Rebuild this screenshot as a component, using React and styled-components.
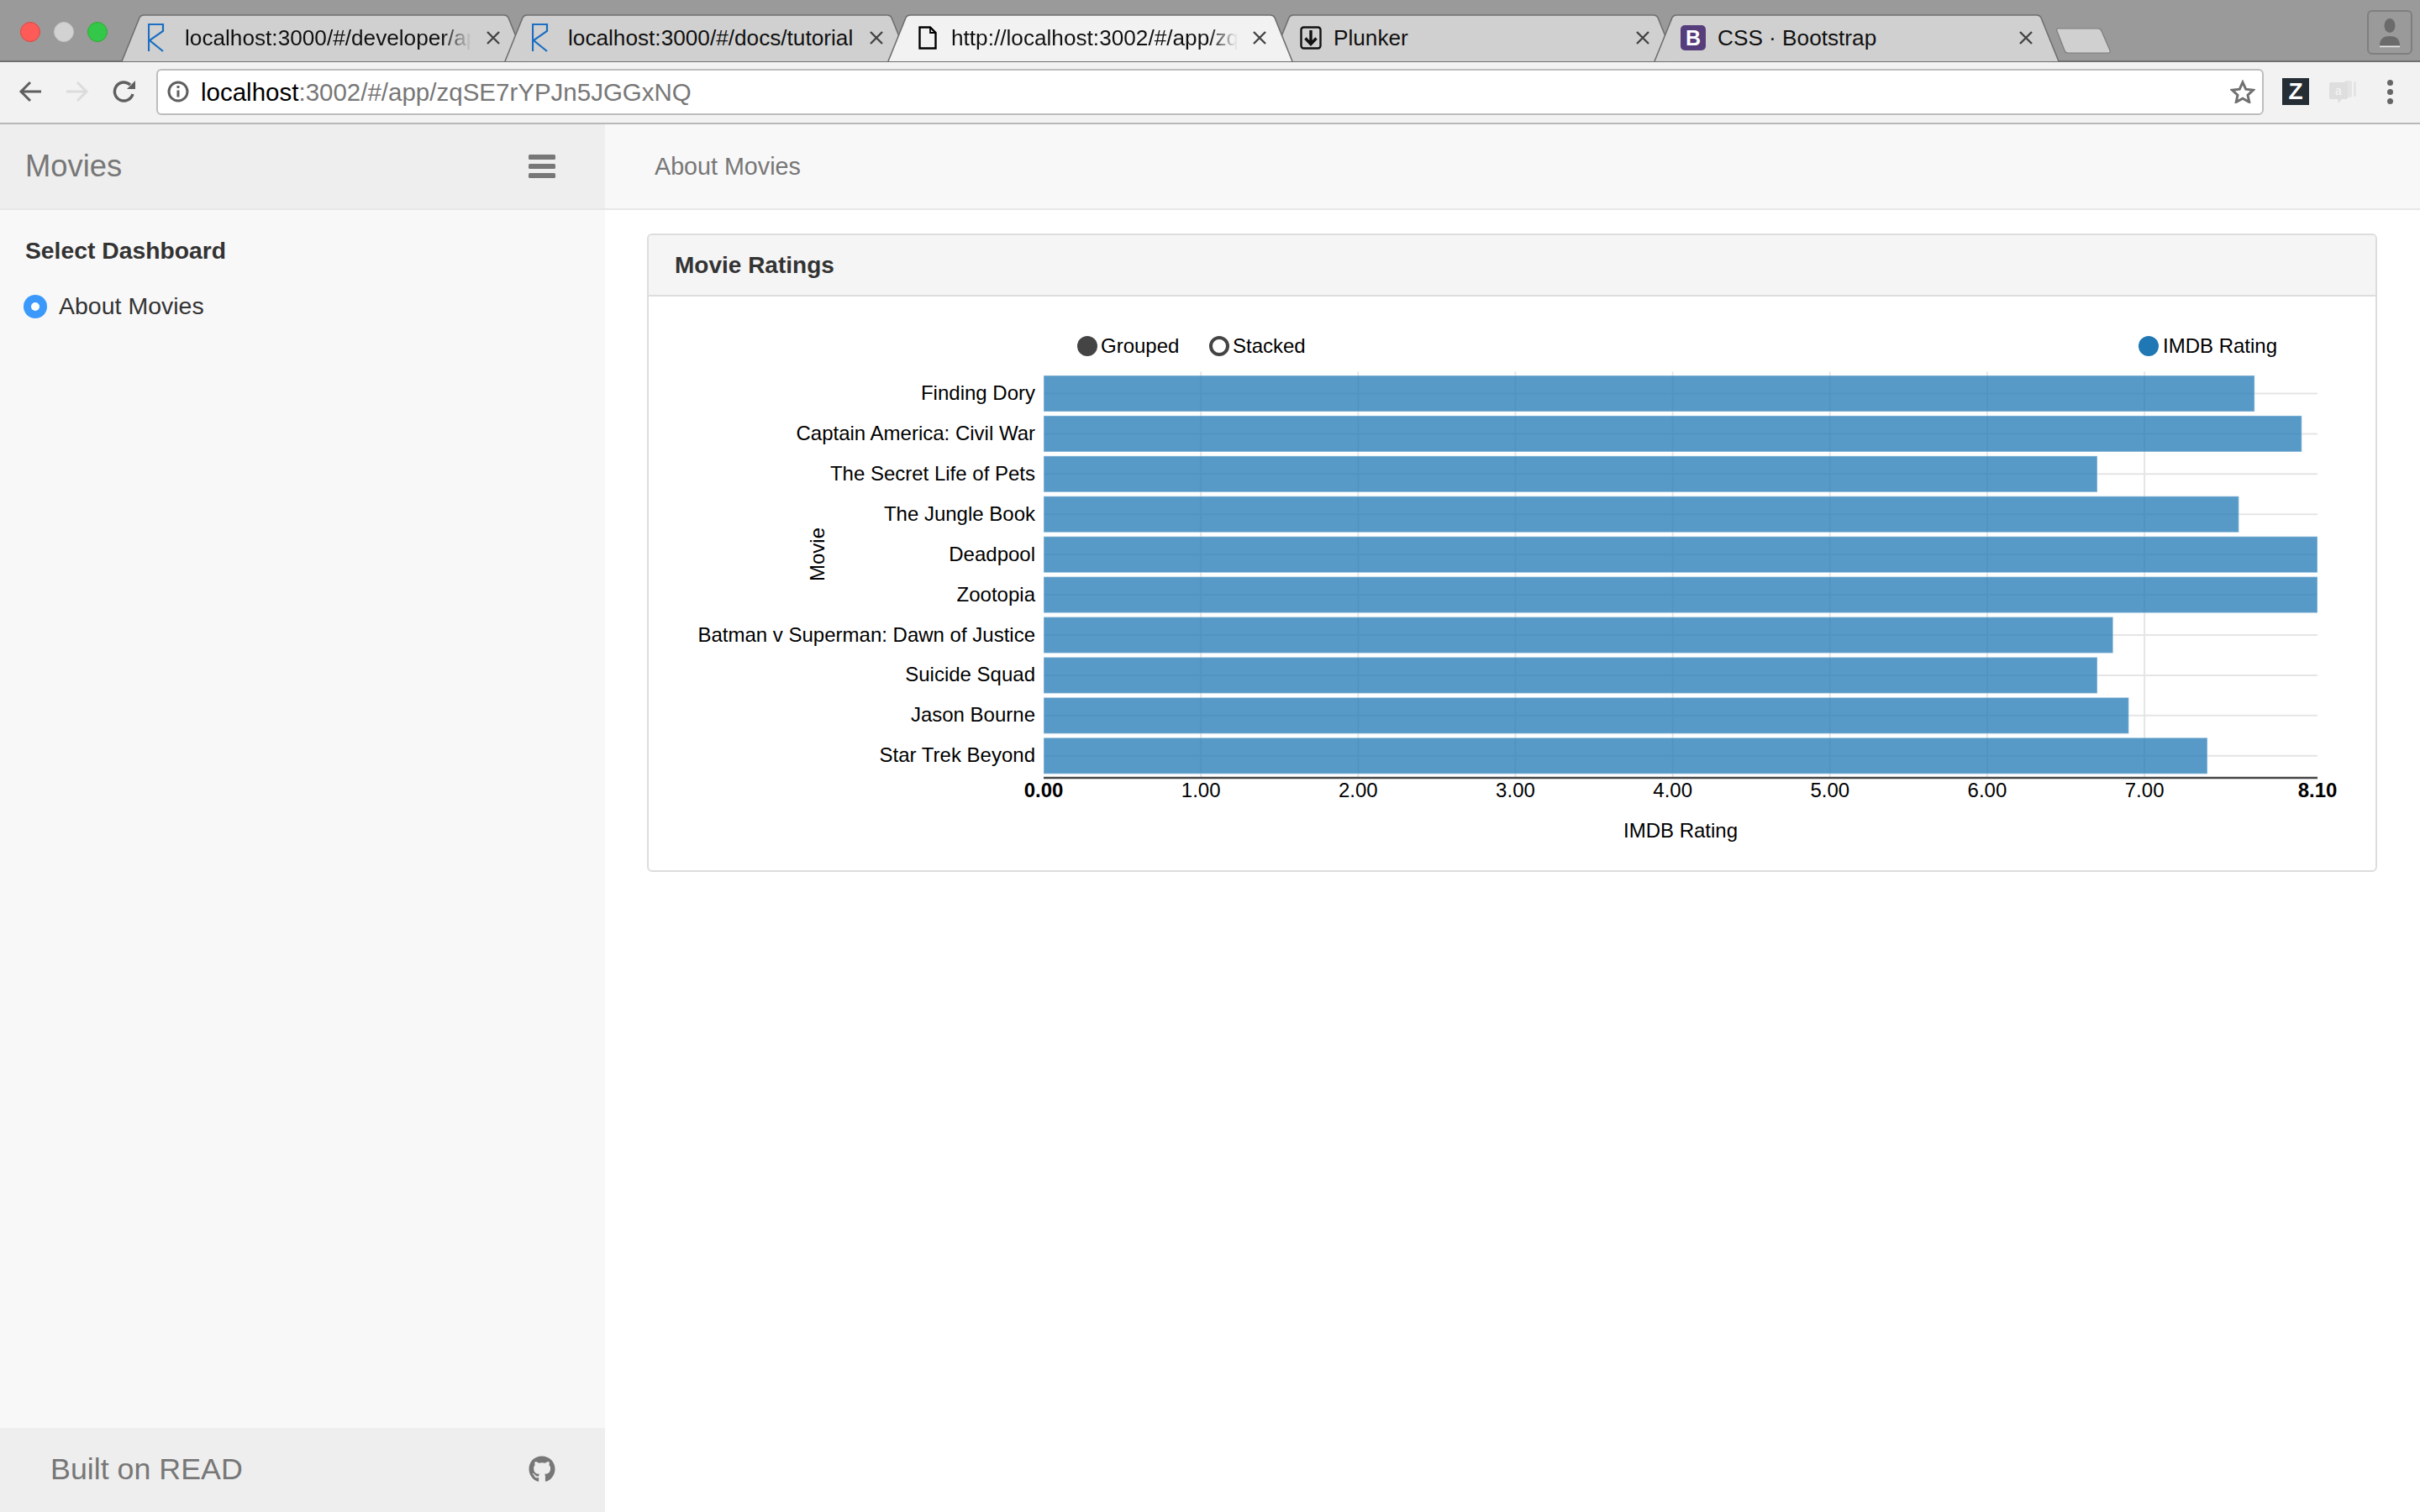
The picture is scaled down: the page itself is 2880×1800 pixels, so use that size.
import React from 'react';
import styled, { createGlobalStyle } from 'styled-components';
import { FaGithub } from 'react-icons/fa';

const Global = createGlobalStyle`
  html, body { margin: 0; padding: 0; background: #fff; }
  body { font-family: "Liberation Sans", Arial, sans-serif; }
  * { box-sizing: border-box; }
`;

const Page = styled.div`
  width: 2880px;
  height: 1800px;
  display: flex;
  flex-direction: column;
  overflow: hidden;
`;

/* ---------- browser chrome ---------- */
const TabStrip = styled.div`
  height: 74px;
  flex: none;
  background: #9a9a9a;
  border-bottom: 2px solid #6f6f6f;
  display: flex;
  align-items: flex-start;
  position: relative;
`;
const Lights = styled.div`
  width: 144px;
  flex: none;
  display: flex;
  gap: 16px;
  padding: 26px 0 0 24px;
`;
const Light = styled.span`
  width: 24px;
  height: 24px;
  border-radius: 50%;
  background: ${p => p.$c};
  border: 1px solid ${p => p.$b};
`;
const Tabs = styled.div`
  display: flex;
  margin-top: 17px;
  height: 57px;
`;
const Tab = styled.div`
  position: relative;
  width: 483px;
  height: 57px;
  flex: none;
  margin-right: -27px;
  padding: 0 32px 1px ${p => p.$pad || 32}px;
  display: flex;
  align-items: center;
  z-index: ${p => (p.$active ? 2 : 1)};
`;
const TabShape = styled.svg`
  position: absolute;
  left: 0;
  top: 0;
  width: 483px;
  height: 57px;
`;
const IconSlot = styled.span`
  position: relative;
  width: ${p => p.$w || 44}px;
  flex: none;
  display: flex;
  align-items: center;
`;
const TabTitle = styled.span`
  position: relative;
  flex: 1;
  min-width: 0;
  font-size: 26.2px;
  color: #111;
  white-space: nowrap;
  ${p => p.$fade && 'mask-image: linear-gradient(to right, #000 calc(100% - 34px), transparent);'}
`;
const CloseIcon = styled.svg`
  position: relative;
  width: 16px;
  height: 16px;
  flex: none;
  margin-left: 18px;
  stroke: #444;
  stroke-width: 2.4;
  fill: none;
`;
const NewTab = styled.svg`
  position: absolute;
  left: 2445px;
  top: 31px;
  width: 68px;
  height: 34px;
  z-index: 3;
`;
const Profile = styled.div`
  position: absolute;
  left: 2817px;
  top: 12px;
  width: 54px;
  height: 53px;
  border: 2px solid #7f7f7f;
  border-radius: 6px;
  display: flex;
  align-items: center;
  justify-content: center;
`;

const Toolbar = styled.div`
  height: 74px;
  flex: none;
  background: #f2f2f2;
  border-bottom: 2px solid #b8b8b8;
  display: flex;
  align-items: center;
  padding: 0 0 2px 22px;
`;
const NavIcon = styled.svg`
  width: ${p => p.$w || 28}px;
  height: 28px;
  flex: none;
  margin-right: ${p => p.$mr || 0}px;
  fill: none;
  stroke: ${p => p.$c || '#5f5f5f'};
  stroke-width: 3;
`;
const Omnibox = styled.div`
  width: 2508px;
  height: 55px;
  flex: none;
  background: #fff;
  border: 2px solid #bdbdbd;
  border-radius: 6px;
  display: flex;
  align-items: center;
  padding: 0 8px 0 11px;
`;
const Url = styled.div`
  flex: 1;
  font-size: 29.5px;
  padding-top: 2px;
  color: #777;
  margin-left: 14px;
  white-space: nowrap;
`;
const Host = styled.span`
  color: #000;
`;
const Ext = styled.div`
  width: 32px;
  height: 32px;
  flex: none;
  margin-left: 22px;
  background: #252d35;
  color: #fff;
  font-size: 28px;
  font-weight: 700;
  display: flex;
  align-items: center;
  justify-content: center;
`;
const Dots = styled.div`
  margin-left: 37px;
  width: 8px;
  flex: none;
  display: flex;
  flex-direction: column;
  gap: 4px;
`;
const Dot = styled.span`
  width: 7px;
  height: 7px;
  border-radius: 50%;
  background: #666;
`;

/* ---------- application ---------- */
const Body = styled.div`
  flex: 1;
  min-height: 0;
  display: flex;
`;
const Sidebar = styled.aside`
  width: 720px;
  flex: none;
  background: #f8f8f8;
  display: flex;
  flex-direction: column;
`;
const SideHead = styled.div`
  height: 102px;
  flex: none;
  background: #eee;
  border-bottom: 2px solid #e7e7e7;
  display: flex;
  align-items: center;
  justify-content: space-between;
  padding: 0 59px 0 30px;
`;
const Brand = styled.div`
  font-size: 36.4px;
  color: #777;
`;
const Burger = styled.div`
  width: 32px;
  display: flex;
  flex-direction: column;
  gap: 5px;
`;
const BurgerBar = styled.span`
  height: 6px;
  border-radius: 1.5px;
  background: #777;
`;
const SideContent = styled.div`
  flex: 1;
  padding: 31px 30px;
`;
const SideTitle = styled.div`
  font-size: 28.3px;
  font-weight: 700;
  color: #333;
  line-height: 34px;
  margin-bottom: 32px;
`;
const RadioRow = styled.div`
  display: flex;
  align-items: flex-start;
  gap: 14px;
`;
const Radio = styled.span`
  width: 28px;
  height: 28px;
  flex: none;
  margin: 4px 0 0 -2px;
  border-radius: 50%;
  background: #3b99fc;
  display: flex;
  align-items: center;
  justify-content: center;
  &::after {
    content: '';
    width: 10px;
    height: 10px;
    border-radius: 50%;
    background: #fff;
  }
`;
const RadioLabel = styled.span`
  font-size: 28.5px;
  line-height: 34px;
  color: #333;
`;
const SideFoot = styled.div`
  height: 100px;
  flex: none;
  background: #eee;
  display: flex;
  align-items: center;
  justify-content: space-between;
  padding: 0 59px 2px 60px;
  font-size: 35.8px;
  color: #777;
`;
const Main = styled.main`
  flex: 1;
  min-width: 0;
  background: #fff;
`;
const MainNav = styled.div`
  height: 102px;
  background: #f8f8f8;
  border-bottom: 2px solid #e7e7e7;
  display: flex;
  align-items: center;
  padding: 0 0 0 59px;
  font-size: 28.7px;
  color: #777;
`;
const Card = styled.section`
  margin: 28px 51px 0 50px;
  height: 760px;
  border: 2px solid #ddd;
  border-radius: 6px;
  background: #fff;
  overflow: hidden;
`;
const CardHead = styled.header`
  height: 73px;
  background: #f5f5f5;
  border-bottom: 2px solid #ddd;
  display: flex;
  align-items: center;
  padding: 1px 31px 0;
  font-size: 28px;
  font-weight: 700;
  color: #333;
`;
const ChartSvg = styled.svg`
  display: block;
  width: 2055px;
  height: 683px;
  font-family: "Liberation Sans", Arial, sans-serif;
  font-size: 24px;
`;

const RFavicon = () => (
  <svg width="20" height="34" viewBox="0 0 20 34" fill="none" stroke="#1b6ec2" strokeWidth="2.2">
    <path d="M1 33V1H18V9L2 20L18 33" />
  </svg>
);
const DocIcon = () => (
  <svg width="22" height="28" viewBox="0 0 22 28" fill="none" stroke="#000" strokeWidth="2.4">
    <path d="M1.5 1.5H14L20.5 8V26.5H1.5Z" />
    <path d="M14 1.5V8H20.5" strokeWidth="1.8" />
  </svg>
);
const PlunkIcon = () => (
  <svg width="26" height="28" viewBox="0 0 26 28" fill="none">
    <rect x="1.5" y="1.5" width="23" height="25" rx="3" stroke="#111" strokeWidth="2.4" />
    <path d="M13 5V21M6.5 14.5L13 21.5L19.5 14.5" stroke="#111" strokeWidth="3.4" />
  </svg>
);
const BootIcon = () => (
  <svg width="30" height="30" viewBox="0 0 30 30">
    <rect width="30" height="30" rx="5" fill="#563d7c" />
    <text x="15" y="24" textAnchor="middle" fontSize="25" fontWeight="700" fill="#fff" fontFamily="Liberation Sans">B</text>
  </svg>
);

const tabPath = 'M1 56 L22 4 Q23.5 1 27 1 L456 1 Q459.5 1 461 4 L482 56';
const tabs = [
  { title: 'localhost:3000/#/developer/ap', icon: <RFavicon />, fade: true },
  { title: 'localhost:3000/#/docs/tutorial', icon: <RFavicon />, pad: 33, w: 43 },
  { title: 'http://localhost:3002/#/app/zq', icon: <DocIcon />, active: true, fade: true, pad: 37, w: 39 },
  { title: 'Plunker', icon: <PlunkIcon />, pad: 35, w: 40 },
  { title: 'CSS · Bootstrap', icon: <BootIcon /> },
];

const X0 = 1242;
const UNIT = 187.16;
const XMAX = X0 + 8.1 * UNIT;
const BAND = 47.92;
const TOP = 442.5;
const movies = [
  ['Finding Dory', 7.7],
  ['Captain America: Civil War', 8.0],
  ['The Secret Life of Pets', 6.7],
  ['The Jungle Book', 7.6],
  ['Deadpool', 8.1],
  ['Zootopia', 8.1],
  ['Batman v Superman: Dawn of Justice', 6.8],
  ['Suicide Squad', 6.7],
  ['Jason Bourne', 6.9],
  ['Star Trek Beyond', 7.4],
];
const ticks = [1, 2, 3, 4, 5, 6, 7];

const Chart = () => (
  <ChartSvg viewBox="772 353 2055 683">
    <circle cx="1294" cy="412" r="12" fill="#444" />
    <text x="1310" y="420" fill="#000">Grouped</text>
    <circle cx="1451" cy="412" r="10" fill="#fff" stroke="#444" strokeWidth="4" />
    <text x="1467" y="420" fill="#000">Stacked</text>
    <circle cx="2557" cy="412" r="12" fill="#1f77b4" />
    <text x="2574" y="420" fill="#000">IMDB Rating</text>

    {ticks.map(t => (
      <line key={t} x1={X0 + t * UNIT} x2={X0 + t * UNIT} y1={TOP} y2={926} stroke="#e5e5e5" strokeWidth="2" />
    ))}
    {movies.map((m, i) => (
      <line key={m[0]} x1={X0} x2={XMAX} y1={TOP + 26 + i * BAND} y2={TOP + 26 + i * BAND} stroke="#e5e5e5" strokeWidth="2" />
    ))}
    {movies.map((m, i) => (
      <rect
        key={m[0]}
        x={X0}
        y={TOP + 4.5 + i * BAND}
        width={m[1] * UNIT}
        height={43}
        fill="#1f77b4"
        fillOpacity="0.75"
        stroke="#fff"
        strokeOpacity="0.3"
        strokeWidth="1.5"
      />
    ))}
    {movies.map((m, i) => (
      <text key={m[0]} x="1232" y={TOP + 33.5 + i * BAND} textAnchor="end" fill="#000">{m[0]}</text>
    ))}
    <text transform="translate(981 660) rotate(-90)" textAnchor="middle" fill="#000">Movie</text>

    <line x1={X0} x2={XMAX} y1="926" y2="926" stroke="#444" strokeWidth="2.5" />
    <text x={X0} y="949" textAnchor="middle" fontWeight="700" fill="#000">0.00</text>
    {ticks.map(t => (
      <text key={t} x={X0 + t * UNIT} y="949" textAnchor="middle" fill="#000">{t}.00</text>
    ))}
    <text x={XMAX} y="949" textAnchor="middle" fontWeight="700" fill="#000">8.10</text>
    <text x="2000" y="997" textAnchor="middle" fill="#000">IMDB Rating</text>
  </ChartSvg>
);

export default function App() {
  return (
    <Page>
      <Global />
      <TabStrip>
        <Lights>
          <Light $c="#fc5b57" $b="#df4744" />
          <Light $c="#d2d2d2" $b="#c4c4c4" />
          <Light $c="#34c84a" $b="#2dac2f" />
        </Lights>
        <Tabs>
          {tabs.map(t => (
            <Tab key={t.title} $active={t.active} $pad={t.pad}>
              <TabShape viewBox="0 0 483 57">
                <path d={tabPath} fill={t.active ? '#f2f2f2' : '#d0d0d0'} stroke="#6f6f6f" strokeWidth="1.6" />
              </TabShape>
              <IconSlot $w={t.w}>{t.icon}</IconSlot>
              <TabTitle $fade={t.fade}>{t.title}</TabTitle>
              <CloseIcon viewBox="0 0 16 16"><path d="M1 1L15 15M15 1L1 15" /></CloseIcon>
            </Tab>
          ))}
        </Tabs>
        <NewTab viewBox="0 0 68 34">
          <path d="M4 3H52Q55 3 56 6L66 29Q67 32 64 32H16Q13 32 12 29L3 6Q2 3 4 3Z" fill="#d0d0d0" stroke="#7d7d7d" strokeWidth="1.2" />
        </NewTab>
        <Profile>
          <svg width="26" height="36" viewBox="0 0 26 36" fill="#6b6b6b">
            <ellipse cx="13" cy="9.5" rx="6.5" ry="8.5" />
            <path d="M1 33C1 25 6 22 13 22S25 25 25 33Z" />
            <path d="M1 34.5H25" stroke="#e8e8e8" strokeWidth="1.4" />
          </svg>
        </Profile>
      </TabStrip>
      <Toolbar>
        <NavIcon viewBox="0 0 28 28" $mr={28}><path d="M27 14H3M14 3L3 14L14 25" /></NavIcon>
        <NavIcon viewBox="0 0 28 28" $c="#dcdcdc" $mr={28}><path d="M1 14H25M14 3L25 14L14 25" /></NavIcon>
        <NavIcon viewBox="0 0 28 28" $mr={24}>
          <path d="M24 17A11 11 0 1 1 21 6" strokeWidth="3.4" />
          <path d="M27 1V11H17Z" fill="#5f5f5f" stroke="none" />
        </NavIcon>
        <Omnibox>
          <svg width="26" height="26" viewBox="0 0 26 26" fill="none" stroke="#5f5f5f">
            <circle cx="13" cy="13" r="11" strokeWidth="3" />
            <path d="M13 11.5V19.5" strokeWidth="3" />
            <path d="M13 6V9" strokeWidth="3" />
          </svg>
          <Url><Host>localhost</Host>:3002/#/app/zqSE7rYPJn5JGGxNQ</Url>
          <svg width="30" height="28" viewBox="0 0 30 28" fill="none" stroke="#707070" strokeWidth="3">
            <path d="M15 3L18.7 11.2L27.5 12.2L21 18.2L22.8 26.5L15 22.2L7.2 26.5L9 18.2L2.5 12.2L11.3 11.2Z" />
          </svg>
        </Omnibox>
        <Ext>Z</Ext>
        <svg width="32" height="28" viewBox="0 0 32 28" style={{ marginLeft: 24, flex: 'none' }}>
          <rect x="18" y="1" width="9" height="20" rx="2" fill="#e4e4e4" />
          <rect x="29" y="2" width="3" height="18" rx="1.5" fill="#e4e4e4" />
          <path d="M2 3H20Q22 3 22 5V21Q22 23 20 23H15L11 28L10 23H2Q0 23 0 21V5Q0 3 2 3Z" fill="#dedede" />
          <text x="11" y="18" textAnchor="middle" fontSize="14" fill="#f6f6f6" fontFamily="Liberation Sans">a</text>
        </svg>
        <Dots><Dot /><Dot /><Dot /></Dots>
      </Toolbar>
      <Body>
        <Sidebar>
          <SideHead>
            <Brand>Movies</Brand>
            <Burger><BurgerBar /><BurgerBar /><BurgerBar /></Burger>
          </SideHead>
          <SideContent>
            <SideTitle>Select Dashboard</SideTitle>
            <RadioRow>
              <Radio />
              <RadioLabel>About Movies</RadioLabel>
            </RadioRow>
          </SideContent>
          <SideFoot>
            <span>Built on READ</span>
            <FaGithub size={32} color="#777" />
          </SideFoot>
        </Sidebar>
        <Main>
          <MainNav>About Movies</MainNav>
          <Card>
            <CardHead>Movie Ratings</CardHead>
            <Chart />
          </Card>
        </Main>
      </Body>
    </Page>
  );
}
